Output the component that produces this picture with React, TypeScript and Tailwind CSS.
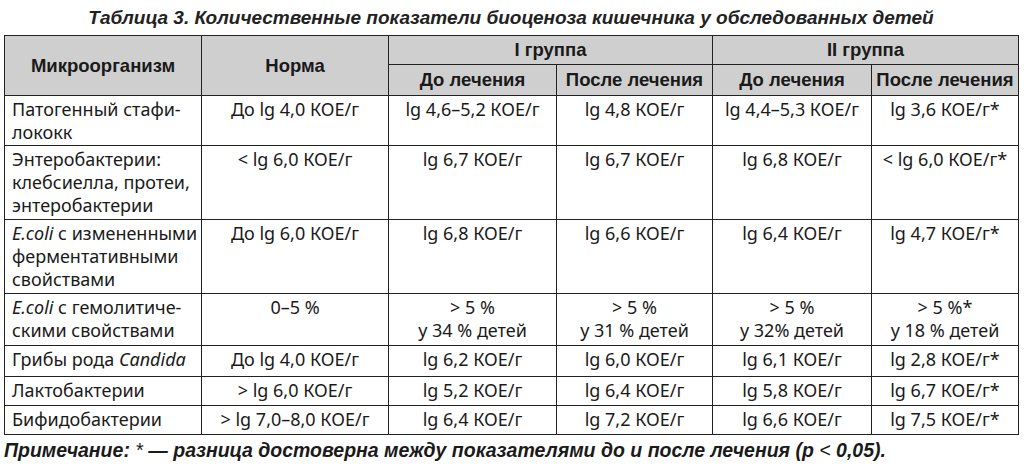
const rows: { name: React.ReactNode; norm: string; vals: React.ReactNode[]; h: string }[] = [
  {
    name: <>Патогенный стафи-<br />лококк</>,
    norm: 'До lg 4,0 КОЕ/г',
    vals: ['lg 4,6–5,2 КОЕ/г', 'lg 4,8 КОЕ/г', 'lg 4,4–5,3 КОЕ/г', 'lg 3,6 КОЕ/г*'],
    h: 'h-[50px]',
  },
  {
    name: <>Энтеробактерии:<br />клебсиелла, протеи,<br />энтеробактерии</>,
    norm: '< lg 6,0 КОЕ/г',
    vals: ['lg 6,7 КОЕ/г', 'lg 6,7 КОЕ/г', 'lg 6,8 КОЕ/г', '< lg 6,0 КОЕ/г*'],
    h: 'h-[74px]',
  },
  {
    name: <><i>E.coli</i> с измененными<br />ферментативными<br />свойствами</>,
    norm: 'До lg 6,0 КОЕ/г',
    vals: ['lg 6,8 КОЕ/г', 'lg 6,6 КОЕ/г', 'lg 6,4 КОЕ/г', 'lg 4,7 КОЕ/г*'],
    h: 'h-[74px]',
  },
  {
    name: <><i>E.coli</i> с гемолитиче-<br />скими свойствами</>,
    norm: '0–5 %',
    vals: [
      <>&gt; 5 %<br />у 34 % детей</>,
      <>&gt; 5 %<br />у 31 % детей</>,
      <>&gt; 5 %<br />у 32% детей</>,
      <>&gt; 5 %*<br />у 18 % детей</>,
    ],
    h: 'h-[52px]',
  },
  {
    name: <>Грибы рода <i>Candida</i></>,
    norm: 'До lg 4,0 КОЕ/г',
    vals: ['lg 6,2 КОЕ/г', 'lg 6,0 КОЕ/г', 'lg 6,1 КОЕ/г', 'lg 2,8 КОЕ/г*'],
    h: 'h-[31px]',
  },
  {
    name: 'Лактобактерии',
    norm: '> lg 6,0 КОЕ/г',
    vals: ['lg 5,2 КОЕ/г', 'lg 6,4 КОЕ/г', 'lg 5,8 КОЕ/г', 'lg 6,7 КОЕ/г*'],
    h: 'h-[29px]',
  },
  {
    name: 'Бифидобактерии',
    norm: '> lg 7,0–8,0 КОЕ/г',
    vals: ['lg 6,4 КОЕ/г', 'lg 7,2 КОЕ/г', 'lg 6,6 КОЕ/г', 'lg 7,5 КОЕ/г*'],
    h: 'h-[29px]',
  },
]

const td = 'border border-[#222] align-top pt-[2px] pb-0 leading-[23px]'
const th = 'border border-[#222] bg-[#cfcfcf] font-bold font-["Liberation_Sans",Arial,sans-serif] text-[18.5px] text-[#1a1a1a] px-0'

export default function App() {
  return (
    <div className="w-[1032px] h-[466px] bg-white text-[#1a1a1a] overflow-hidden">
      <h1 className="pt-[6px] pr-[10px] h-[35px] text-center font-['Liberation_Sans',Arial,sans-serif] font-bold italic text-[19px] leading-[24px] text-[#222]">
        Таблица 3. Количественные показатели биоценоза кишечника у обследованных детей
      </h1>
      <table className="ml-[4px] w-[1015px] table-fixed border-collapse font-['Noto_Sans',sans-serif] text-[18px] text-[#1a1a1a]">
        <colgroup>
          <col className="w-[197px]" />
          <col className="w-[187px]" />
          <col className="w-[168px]" />
          <col className="w-[156px]" />
          <col className="w-[159px]" />
          <col className="w-[147px]" />
        </colgroup>
        <thead>
          <tr className="h-[29px]">
            <th rowSpan={2} className={th}>Микроорганизм</th>
            <th rowSpan={2} className={th}>Норма</th>
            <th colSpan={2} className={th}>I группа</th>
            <th colSpan={2} className={th}>II группа</th>
          </tr>
          <tr className="h-[31px]">
            <th className={th}>До лечения</th>
            <th className={th}>После лечения</th>
            <th className={th}>До лечения</th>
            <th className={th}>После лечения</th>
          </tr>
        </thead>
        <tbody>
          {rows.map((r, i) => (
            <tr key={i} className={r.h}>
              <td className={`${td} pl-[7px] pr-0 text-left whitespace-nowrap`}>{r.name}</td>
              <td className={`${td} text-center whitespace-nowrap`}>{r.norm}</td>
              {r.vals.map((v, j) => (
                <td key={j} className={`${td} text-center whitespace-nowrap`}>{v}</td>
              ))}
            </tr>
          ))}
        </tbody>
      </table>
      <p className="ml-[4px] mt-[3px] font-['Liberation_Sans',Arial,sans-serif] font-bold italic text-[19.5px] leading-[24px] text-[#1a1a1a]">
        Примечание: <span className="font-normal">*</span> — разница достоверна между показателями до и после лечения (p <span className="font-normal">&lt;</span> 0,05).
      </p>
    </div>
  )
}
